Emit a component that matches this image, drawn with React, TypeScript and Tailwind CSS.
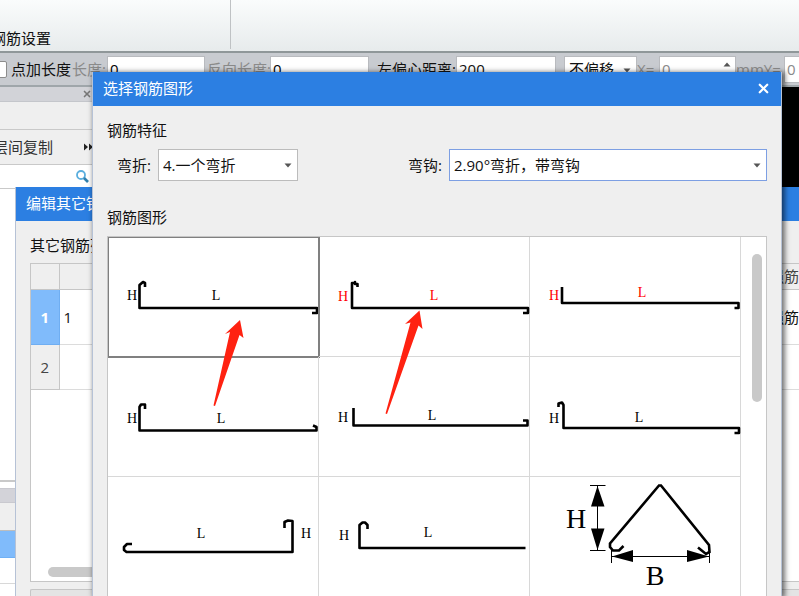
import { useState } from "react"
import type { ReactNode } from "react"
import { X } from "lucide-react"

interface Label {
    text: string
    x: number
    y: number
}

interface Shape {
    name: string
    path: string
    labels: Label[]
    red?: boolean
    arrow?: string
}

const shapes: Shape[] = [
    {
        name: "图形1",
        path: "M37 50V46L35 45L31.5 48V71H209V76H204",
        labels: [{ text: "H", x: 24, y: 63 }, { text: "L", x: 108, y: 63 }],
        arrow: "M132 83L117 97L122 95L105.5 168.5L107 169L131.5 98L135.5 101Z",
    },
    {
        name: "图形2",
        path: "M38.5 50V47H36V45V46H33V71H209V76H204",
        labels: [{ text: "H", x: 24, y: 64 }, { text: "L", x: 115, y: 63 }],
        red: true,
        arrow: "M100.5 73.5L86 87L91.5 85.5L66.5 176.5L68 177L99.5 88.5L103.5 92Z",
    },
    {
        name: "图形3",
        path: "M32 50V66H208.5V71H204.5",
        labels: [{ text: "H", x: 24, y: 63 }, { text: "L", x: 112, y: 60 }],
        red: true,
    },
    {
        name: "图形4",
        path: "M37 52V47.5H33L31.5 50V73.5H208.5V70L205 68.5",
        labels: [{ text: "H", x: 24, y: 66 }, { text: "L", x: 113, y: 66 }],
    },
    {
        name: "图形5",
        path: "M34.5 51V68.5H208.5V63.5H204",
        labels: [{ text: "H", x: 24, y: 65 }, { text: "L", x: 113, y: 63 }],
    },
    {
        name: "图形6",
        path: "M28.5 50V46.5L32 45.5L33.5 48V71H209V76H204.5",
        labels: [{ text: "H", x: 24, y: 66 }, { text: "L", x: 109, y: 65 }],
    },
    {
        name: "图形7",
        path: "M24 67H19L16 70V73L18.5 75H184.5V44L180 43.5L176.5 45V51",
        labels: [{ text: "H", x: 198, y: 61 }, { text: "L", x: 93, y: 61 }],
    },
    {
        name: "图形8",
        path: "M48.5 52V48L46 45.5H43.5L40.5 48V71H206.5",
        labels: [{ text: "H", x: 25, y: 63 }, { text: "L", x: 109, y: 60 }],
    },
]

const titleBar = "flex h-[34px] shrink-0 items-center justify-between bg-[#2c7fe2] pb-[2px] text-white"
const toolInput = "h-[27px] border border-[#b9bbbf] bg-white px-[2px] outline-none"

function DropArrow({ className }: { className: string }) {
    return (
        <svg viewBox="0 0 8 5" className={`pointer-events-none absolute h-[5px] w-2 ${className}`}>
            <path d="M0.5 0.5H7.5L4 4.5Z" fill="#555" />
        </svg>
    )
}

function Separator() {
    return <div className="mx-[4px] h-[26px] w-px bg-[#b1b3b7]" />
}

function Toolbar() {
    return (
        <div className="flex h-[34px] shrink-0 items-center border-b-2 border-[#9fa6aa] bg-[#c8cbd0]">
            <label className="flex w-[72px] shrink-0 items-center gap-[4px]">
                <input type="checkbox" className="-ml-[10px] h-[17px] w-[17px] shrink-0 appearance-none rounded-xs border border-[#8c8c8c] bg-white" />
                <span className="shrink-0 whitespace-nowrap">点加长度</span>
            </label>
            <label className="flex shrink-0 items-center text-[#8a8a8a]">
                <span className="w-[35px] whitespace-nowrap">长度:</span>
                <input defaultValue="0" className={`${toolInput} w-[98px] text-black`} />
            </label>
            <label className="ml-[2px] flex shrink-0 items-center text-[#8a8a8a]">
                <span className="w-[63px] whitespace-nowrap">反向长度:</span>
                <input defaultValue="0" className={`${toolInput} w-[99px] text-black`} />
            </label>
            <Separator />
            <label className="flex shrink-0 items-center">
                <span className="w-[79px] whitespace-nowrap">左偏心距离:</span>
                <input defaultValue="200" className={`${toolInput} w-[100px]`} />
            </label>
            <Separator />
            <div className="relative shrink-0">
                <select aria-label="偏移" className={`${toolInput} w-[73px] appearance-none pl-[4px]`}>
                    <option>不偏移</option>
                </select>
                <DropArrow className="top-[12px] right-[6px]" />
            </div>
            <label className="relative flex shrink-0 items-center text-[#8a8a8a]">
                <span className="w-[22px]">X=</span>
                <input defaultValue="0" className={`${toolInput} w-[77px]`} />
                <DropArrow className="top-[6px] right-[5px] rotate-180" />
            </label>
            <label className="flex shrink-0 items-center text-[#8a8a8a]">
                <span className="w-[48px] whitespace-nowrap">mmY=</span>
                <input defaultValue="0" className={`${toolInput} w-[77px]`} />
            </label>
        </div>
    )
}

function SidePanel() {
    return (
        <div className="flex w-[96px] shrink-0 flex-col bg-white">
            <div className="flex h-[15px] shrink-0 items-center justify-end border-b border-[#c4c6cb] bg-[#d2d3d8] pr-[4px]">
                <button aria-label="关闭面板" className="text-[#777]">
                    <X className="h-[10px] w-[10px]" strokeWidth={4} />
                </button>
            </div>
            <div className="h-[28px] shrink-0 border-b border-[#c9c9c9] bg-[#efefef]" />
            <div className="flex h-[35px] shrink-0 items-center justify-between border-b border-[#c9c9c9] bg-[#efefef] pr-[3px] text-[#333]">
                <button className="-ml-[7px] whitespace-nowrap">层间复制</button>
                <button aria-label="更多">
                    <svg viewBox="0 0 9 8" className="h-2 w-[9px]">
                        <path d="M0 0.5L4 4L0 7.5ZM5 0.5L9 4L5 7.5Z" fill="#222" />
                    </svg>
                </button>
            </div>
            <label className="flex h-[24px] shrink-0 items-center border-b border-[#c9c9c9] pr-[7px]">
                <input aria-label="搜索" className="w-0 grow outline-none" />
                <svg viewBox="0 0 13 13" className="h-[13px] w-[13px]" fill="none">
                    <circle cx="5" cy="5" r="4" stroke="#5aaede" strokeWidth="1.8" />
                    <path d="M8 8L12 12" stroke="#2f7fae" strokeWidth="2.6" />
                </svg>
            </label>
            <div className="h-[293px] shrink-0 border-b-2 border-[#c9c9c9]" />
            <div className="mt-[6px] h-[15px] shrink-0 border-y border-[#c9c9cf] bg-[#d3d3d9]" />
            <div className="h-[28px] shrink-0 border-b border-[#bdbdbd] bg-[#efefef]" />
            <div className="h-[27px] shrink-0 border-b border-[#6fb0f5] bg-[#80bbfb]" />
            <div className="h-[26px] shrink-0 border-b border-[#d8d8d8]" />
        </div>
    )
}

function EditWindow() {
    return (
        <section className="absolute top-[187px] right-0 bottom-0 left-[15px] flex flex-col overflow-hidden border-l border-[#b6c2d6] bg-[#efefef]">
            <header className={`${titleBar} px-[10px]`}>编辑其它钢筋</header>
            <div className="flex min-h-0 grow flex-col pl-[14px]">
                <div className="flex h-[42px] shrink-0 items-center pt-[6px]">其它钢筋列表</div>
                <div className="relative h-[319px] shrink-0 border border-r-0 border-[#c6c6c6] bg-white">
                    <table className="w-full border-collapse">
                        <thead>
                            <tr className="h-[25px] bg-[#efefef] text-[#444]">
                                <th className="w-[28px] border-r border-b border-[#c6c6c6]"></th>
                                <th className="border-b border-[#c6c6c6]"></th>
                                <th className="w-[45px] border-b border-[#c6c6c6] text-right font-normal whitespace-nowrap">加强筋</th>
                            </tr>
                        </thead>
                        <tbody>
                            <tr className="h-[55px]">
                                <td className="border-r border-b border-[#6faef2] bg-[#80bbfb] text-center font-bold text-white">1</td>
                                <td className="border-b border-[#dcdcdc] pl-[4px]">1</td>
                                <td className="border-b border-[#dcdcdc] text-right whitespace-nowrap">加强筋</td>
                            </tr>
                            <tr className="h-[45px]">
                                <td className="border-r border-b border-[#c6c6c6] bg-[#efefef] text-center text-[#444]">2</td>
                                <td className="border-b border-[#dcdcdc]"></td>
                                <td className="border-b border-[#dcdcdc]"></td>
                            </tr>
                        </tbody>
                    </table>
                    <div className="absolute bottom-[4px] left-[17px] h-[10px] w-1/2 rounded-full bg-[#c9c9c9]" />
                </div>
                <div className="mt-[7px] h-[30px] shrink-0 rounded-tl-xs border border-r-0 border-[#c6c6c6] bg-[#e4e4e4]" />
            </div>
        </section>
    )
}

function Cell({ name, selected, onSelect, children }: { name: string; selected: boolean; onSelect: () => void; children: ReactNode }) {
    return (
        <button
            aria-label={name}
            aria-pressed={selected}
            onClick={onSelect}
            className={`relative h-[120px] border-r border-b border-[#d8d8d8] ${selected ? "outline-2 -outline-offset-1 outline-[#808080]" : ""}`}
        >
            {children}
        </button>
    )
}

function BarShape({ shape }: { shape: Shape }) {
    return (
        <svg viewBox="0 0 211 120" className="block h-[120px] w-[211px]">
            <path d={shape.path} fill="none" stroke="#000" strokeWidth="2.6" strokeLinejoin="round" />
            {shape.labels.map((label) => (
                <text
                    key={label.text}
                    x={label.x}
                    y={label.y}
                    textAnchor="middle"
                    fill={shape.red ? "#f00" : "#000"}
                    className="font-['Liberation_Serif',serif] text-[14px]"
                >
                    {label.text}
                </text>
            ))}
        </svg>
    )
}

// triangle stirrup with its height and width dimensions
function TriangleShape() {
    return (
        <svg viewBox="0 0 211 120" className="block h-[120px] w-[211px]">
            <g fill="none" stroke="#000">
                <path d="M93.5 69L89 73.5H83L80 70V66.5L129 8.5H131L179 68L179.5 75L176 77L168 70.5" strokeWidth="2.6" />
                <path d="M60 8.5H75.5M60 73.5H75.5M67.5 8V73M81.5 73V86M179.5 73V86M81 79.5H179" strokeWidth="1" />
            </g>
            <path d="M67.5 9L61 29.5H74.5ZM67.5 73L61 51.5H74.5ZM82 79.5L103 73V85ZM179 79.5L157 73V85Z" />
            <g textAnchor="middle" className="font-['Liberation_Serif',serif] text-[28px]">
                <text x="46" y="51">H</text>
                <text x="125" y="108">B</text>
            </g>
        </svg>
    )
}

function ShapeDialog() {
    const [selected, setSelected] = useState(0)

    return (
        <section
            role="dialog"
            aria-label="选择钢筋图形"
            className="absolute top-[72px] right-[17px] bottom-0 left-[92px] flex flex-col overflow-hidden border-x border-[#b6c2d6] bg-[#efefef] shadow-[2px_1px_5px_1px_rgba(0,0,0,0.55)]"
        >
            <header className={`${titleBar} -mx-px pr-[11px] pl-[11px]`}>
                <h1>选择钢筋图形</h1>
                <button aria-label="关闭">
                    <X className="h-[15px] w-[15px]" strokeWidth={3.5} />
                </button>
            </header>

            <div className="flex min-h-0 grow flex-col px-[14px] pt-[13px]">
                <h2>钢筋特征</h2>
                <div className="mt-[8px] flex items-center pl-[10px]">
                    <label htmlFor="bend" className="w-[41px] whitespace-nowrap">弯折:</label>
                    <div className="relative">
                        <select id="bend" className="h-[32px] w-[140px] appearance-none border border-[#bcbcbc] bg-white pl-[4px] outline-none">
                            <option>4.一个弯折</option>
                        </select>
                        <DropArrow className="top-[14px] right-[6px]" />
                    </div>
                    <label htmlFor="hook" className="ml-[110px] w-[41px] whitespace-nowrap">弯钩:</label>
                    <div className="relative grow">
                        <select id="hook" className="h-[32px] w-full appearance-none border border-[#7d9fe3] bg-white pl-[4px] outline-none">
                            <option>2.90°弯折，带弯钩</option>
                        </select>
                        <DropArrow className="top-[14px] right-[6px]" />
                    </div>
                </div>

                <h2 className="mt-[25px]">钢筋图形</h2>
                <div className="mt-[8px] flex min-h-0 grow justify-between overflow-hidden border border-b-0 border-[#c6c6c6] bg-white">
                    <div className="grid grow auto-rows-min grid-cols-3">
                        {shapes.map((shape, i) => (
                            <Cell key={shape.name} name={shape.name} selected={selected === i} onSelect={() => setSelected(i)}>
                                <BarShape shape={shape} />
                                {shape.arrow && (
                                    <svg viewBox="0 0 211 120" className="pointer-events-none absolute top-0 left-0 z-10 h-[120px] w-[211px] overflow-visible">
                                        <path d={shape.arrow} fill="#ff2211" />
                                    </svg>
                                )}
                            </Cell>
                        ))}
                        <Cell name="图形9" selected={selected === 8} onSelect={() => setSelected(8)}>
                            <TriangleShape />
                        </Cell>
                    </div>
                    {/* Scrollbar */}
                    <div className="flex w-[25px] shrink-0 justify-end pt-[17px] pr-[4px]">
                        <div className="h-[148px] w-[10px] rounded-full bg-[#c9c9c9]" />
                    </div>
                </div>
            </div>
        </section>
    )
}

export default function App() {
    return (
        <div className="relative flex h-screen flex-col overflow-hidden bg-white font-['Open_Sans','Noto_Sans_CJK_SC',sans-serif] text-[15px] leading-[22px] text-[#111]">
            {/* Ribbon */}
            <div className="flex h-[53px] shrink-0 items-start border-b-2 border-[#8f9799] bg-linear-to-b from-[#fafcfc] to-[#e7ebec]">
                <div className="flex h-[49px] w-[231px] items-end border-r border-[#bfc2c4]">
                    <span className="-ml-[9px]">钢筋设置</span>
                </div>
            </div>
            <Toolbar />
            <div className="flex min-h-0 grow overflow-hidden bg-black">
                <SidePanel />
            </div>
            <EditWindow />
            <ShapeDialog />
        </div>
    )
}
